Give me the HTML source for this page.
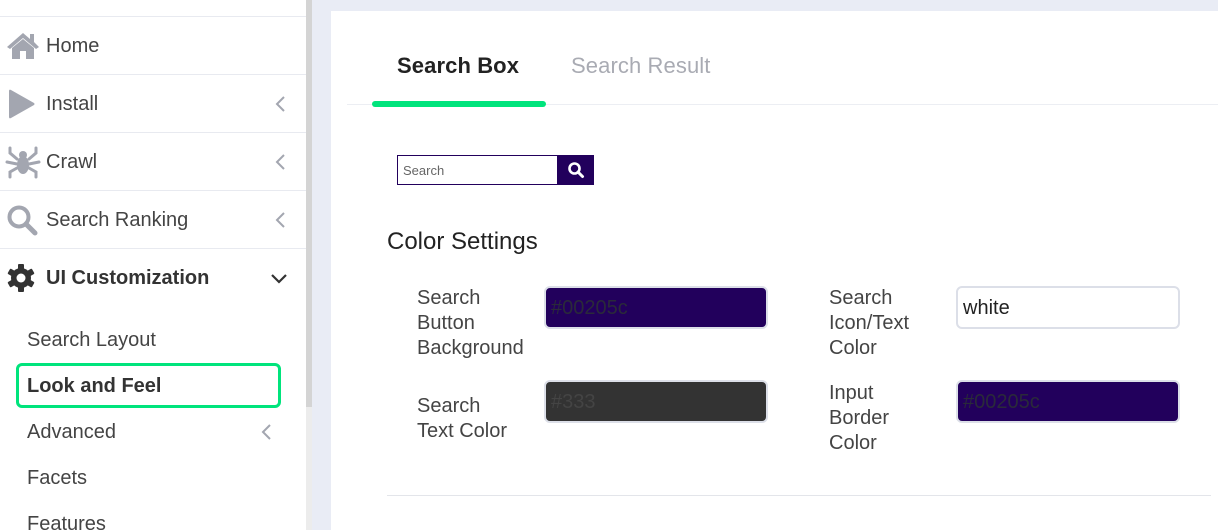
<!DOCTYPE html>
<html><head><meta charset="utf-8"><style>
*{box-sizing:border-box;margin:0;padding:0}
html,body{width:1218px;height:530px;overflow:hidden}
body{background:#e9ecf5;font-family:"Liberation Sans",sans-serif;position:relative;color:#333}
.side{position:absolute;left:0;top:0;width:306px;height:530px;background:#fff}
.sb{position:absolute;left:306px;top:0;width:6px;height:530px;background:#ececec}
.sb i{position:absolute;left:0;top:0;width:6px;height:407px;background:#d4d4d4}
.row{position:absolute;left:0;width:306px;height:58px;border-top:1px solid #e8eaf0;font-size:20px;color:#444}
.row span{position:absolute;left:46px;top:18px}
.row svg{position:absolute}
.chev{position:absolute;left:274px;top:20px;width:12px;height:18px}
.sub{position:absolute;left:27px;font-size:20px;color:#444}
.main{position:absolute;left:331px;top:11px;width:887px;height:519px;background:#fff}
.a{position:absolute}
.lbl{position:absolute;font-size:20px;line-height:25px;color:#444}
.inp{position:absolute;width:224px;height:43px;border:2px solid #dcdfe8;border-radius:6px;font-size:20px;padding:9px 0 0 5px}
</style></head><body>
<div class="side">
 <div class="row" style="top:16px"><svg style="left:6px;top:14px" width="34" height="28" viewBox="0 0 34 28"><path d="M17 2 L1 16 L4 18 L17 7 L30 18 L33 16 L28 11 V3 H24 V8 Z" fill="#a3a6b0"/><path d="M6 17 L17 8 L28 17 V28 H20 V20 H14 V28 H6 Z" fill="#a3a6b0"/></svg><span>Home</span></div>
 <div class="row" style="top:74px"><svg style="left:7px;top:14px" width="28" height="30" viewBox="0 0 28 30"><path d="M2 2 Q2 0 4 1 L27 14 Q28 15 27 16 L4 29 Q2 30 2 28 Z" fill="#a3a6b0"/></svg><span>Install</span><svg class="chev" viewBox="0 0 12 18"><path d="M10 2 L3 9 L10 16" stroke="#a3a6b0" stroke-width="2" fill="none"/></svg></div>
 <div class="row" style="top:132px"><svg style="left:5px;top:12px" width="36" height="34" viewBox="0 0 36 34" fill="none" stroke="#a3a6b0" stroke-width="3" stroke-linecap="round"><ellipse cx="18" cy="20" rx="6" ry="9" fill="#a3a6b0" stroke="none"/><circle cx="18" cy="10" r="4" fill="#a3a6b0" stroke="none"/><path d="M12 14 L5 8 L5 3 M24 14 L31 8 L31 3 M12 19 L2 17 M24 19 L34 17 M12 23 L5 27 L5 32 M24 23 L31 27 L31 32"/></svg><span>Crawl</span><svg class="chev" viewBox="0 0 12 18"><path d="M10 2 L3 9 L10 16" stroke="#a3a6b0" stroke-width="2" fill="none"/></svg></div>
 <div class="row" style="top:190px"><svg style="left:6px;top:13px" width="32" height="32" viewBox="0 0 32 32"><circle cx="13" cy="13" r="9.5" stroke="#a3a6b0" stroke-width="4" fill="none"/><path d="M20 20 L29 29" stroke="#a3a6b0" stroke-width="5" stroke-linecap="round"/></svg><span>Search Ranking</span><svg class="chev" viewBox="0 0 12 18"><path d="M10 2 L3 9 L10 16" stroke="#a3a6b0" stroke-width="2" fill="none"/></svg></div>
 <div class="row" style="top:248px;font-weight:bold;color:#333"><svg style="left:6px;top:14px" width="30" height="30" viewBox="0 0 30 30"><g fill="#333"><circle cx="15" cy="15" r="10"/><rect x="12" y="1" width="6" height="28" rx="1"/><rect x="12" y="1" width="6" height="28" rx="1" transform="rotate(60 15 15)"/><rect x="12" y="1" width="6" height="28" rx="1" transform="rotate(120 15 15)"/></g><circle cx="15" cy="15" r="4.5" fill="#fff"/></svg><span>UI Customization</span><svg style="left:270px;top:24px" width="18" height="12" viewBox="0 0 18 12"><path d="M2 2 L9 9 L16 2" stroke="#333" stroke-width="2.2" fill="none"/></svg></div>
 <div class="sub" style="top:329px">Search Layout</div>
 <div class="a" style="left:16px;top:363px;width:265px;height:45px;border:3px solid #00e47c;border-radius:6px"></div>
 <div class="sub" style="top:375px;font-weight:bold;color:#333">Look and Feel</div>
 <div class="sub" style="top:421px">Advanced</div>
 <svg class="a" style="left:260px;top:423px" width="12" height="18" viewBox="0 0 12 18"><path d="M10 2 L3 9 L10 16" stroke="#a3a6b0" stroke-width="2" fill="none"/></svg>
 <div class="sub" style="top:467px">Facets</div>
 <div class="sub" style="top:513px">Features</div>
</div>
<div class="sb"><i></i></div>
<div class="main">
 <div class="a" style="left:66px;top:42px;font-size:22px;font-weight:bold;color:#222;letter-spacing:0.1px">Search Box</div>
 <div class="a" style="left:240px;top:42px;font-size:22px;color:#a9abb3;letter-spacing:0.1px">Search Result</div>
 <div class="a" style="left:16px;top:93px;width:871px;height:1px;background:#eceef3"></div>
 <div class="a" style="left:41px;top:90px;width:174px;height:6px;background:#00e47c;border-radius:3px"></div>
 <div class="a" style="left:66px;top:144px;width:161px;height:30px;border:1px solid #22005c;font-size:13px;color:#666;padding:7px 0 0 5px">Search</div>
 <div class="a" style="left:226px;top:144px;width:37px;height:30px;background:#22005c"><svg style="position:absolute;left:10px;top:6px" width="18" height="18" viewBox="0 0 18 18"><circle cx="7.5" cy="7.5" r="5" stroke="#fff" stroke-width="2.6" fill="none"/><path d="M11 11 L15.5 15.5" stroke="#fff" stroke-width="3" stroke-linecap="round"/></svg></div>
 <div class="a" style="left:56px;top:217px;font-size:24px;color:#222">Color Settings</div>
 <div class="lbl" style="left:86px;top:275px">Search<br>Button<br>Background</div>
 <div class="inp" style="left:213px;top:275px;background:#22005c;color:#2a2a3a">#00205c</div>
 <div class="lbl" style="left:86px;top:383px">Search<br>Text Color</div>
 <div class="inp" style="left:213px;top:369px;background:#333;color:#444">#333</div>
 <div class="lbl" style="left:498px;top:275px">Search<br>Icon/Text<br>Color</div>
 <div class="inp" style="left:625px;top:275px;background:#fff;color:#222">white</div>
 <div class="lbl" style="left:498px;top:370px">Input<br>Border<br>Color</div>
 <div class="inp" style="left:625px;top:369px;background:#22005c;color:#2a2a3a">#00205c</div>
 <div class="a" style="left:56px;top:484px;width:824px;height:1px;background:#e3e5ea"></div>
</div>
</body></html>
